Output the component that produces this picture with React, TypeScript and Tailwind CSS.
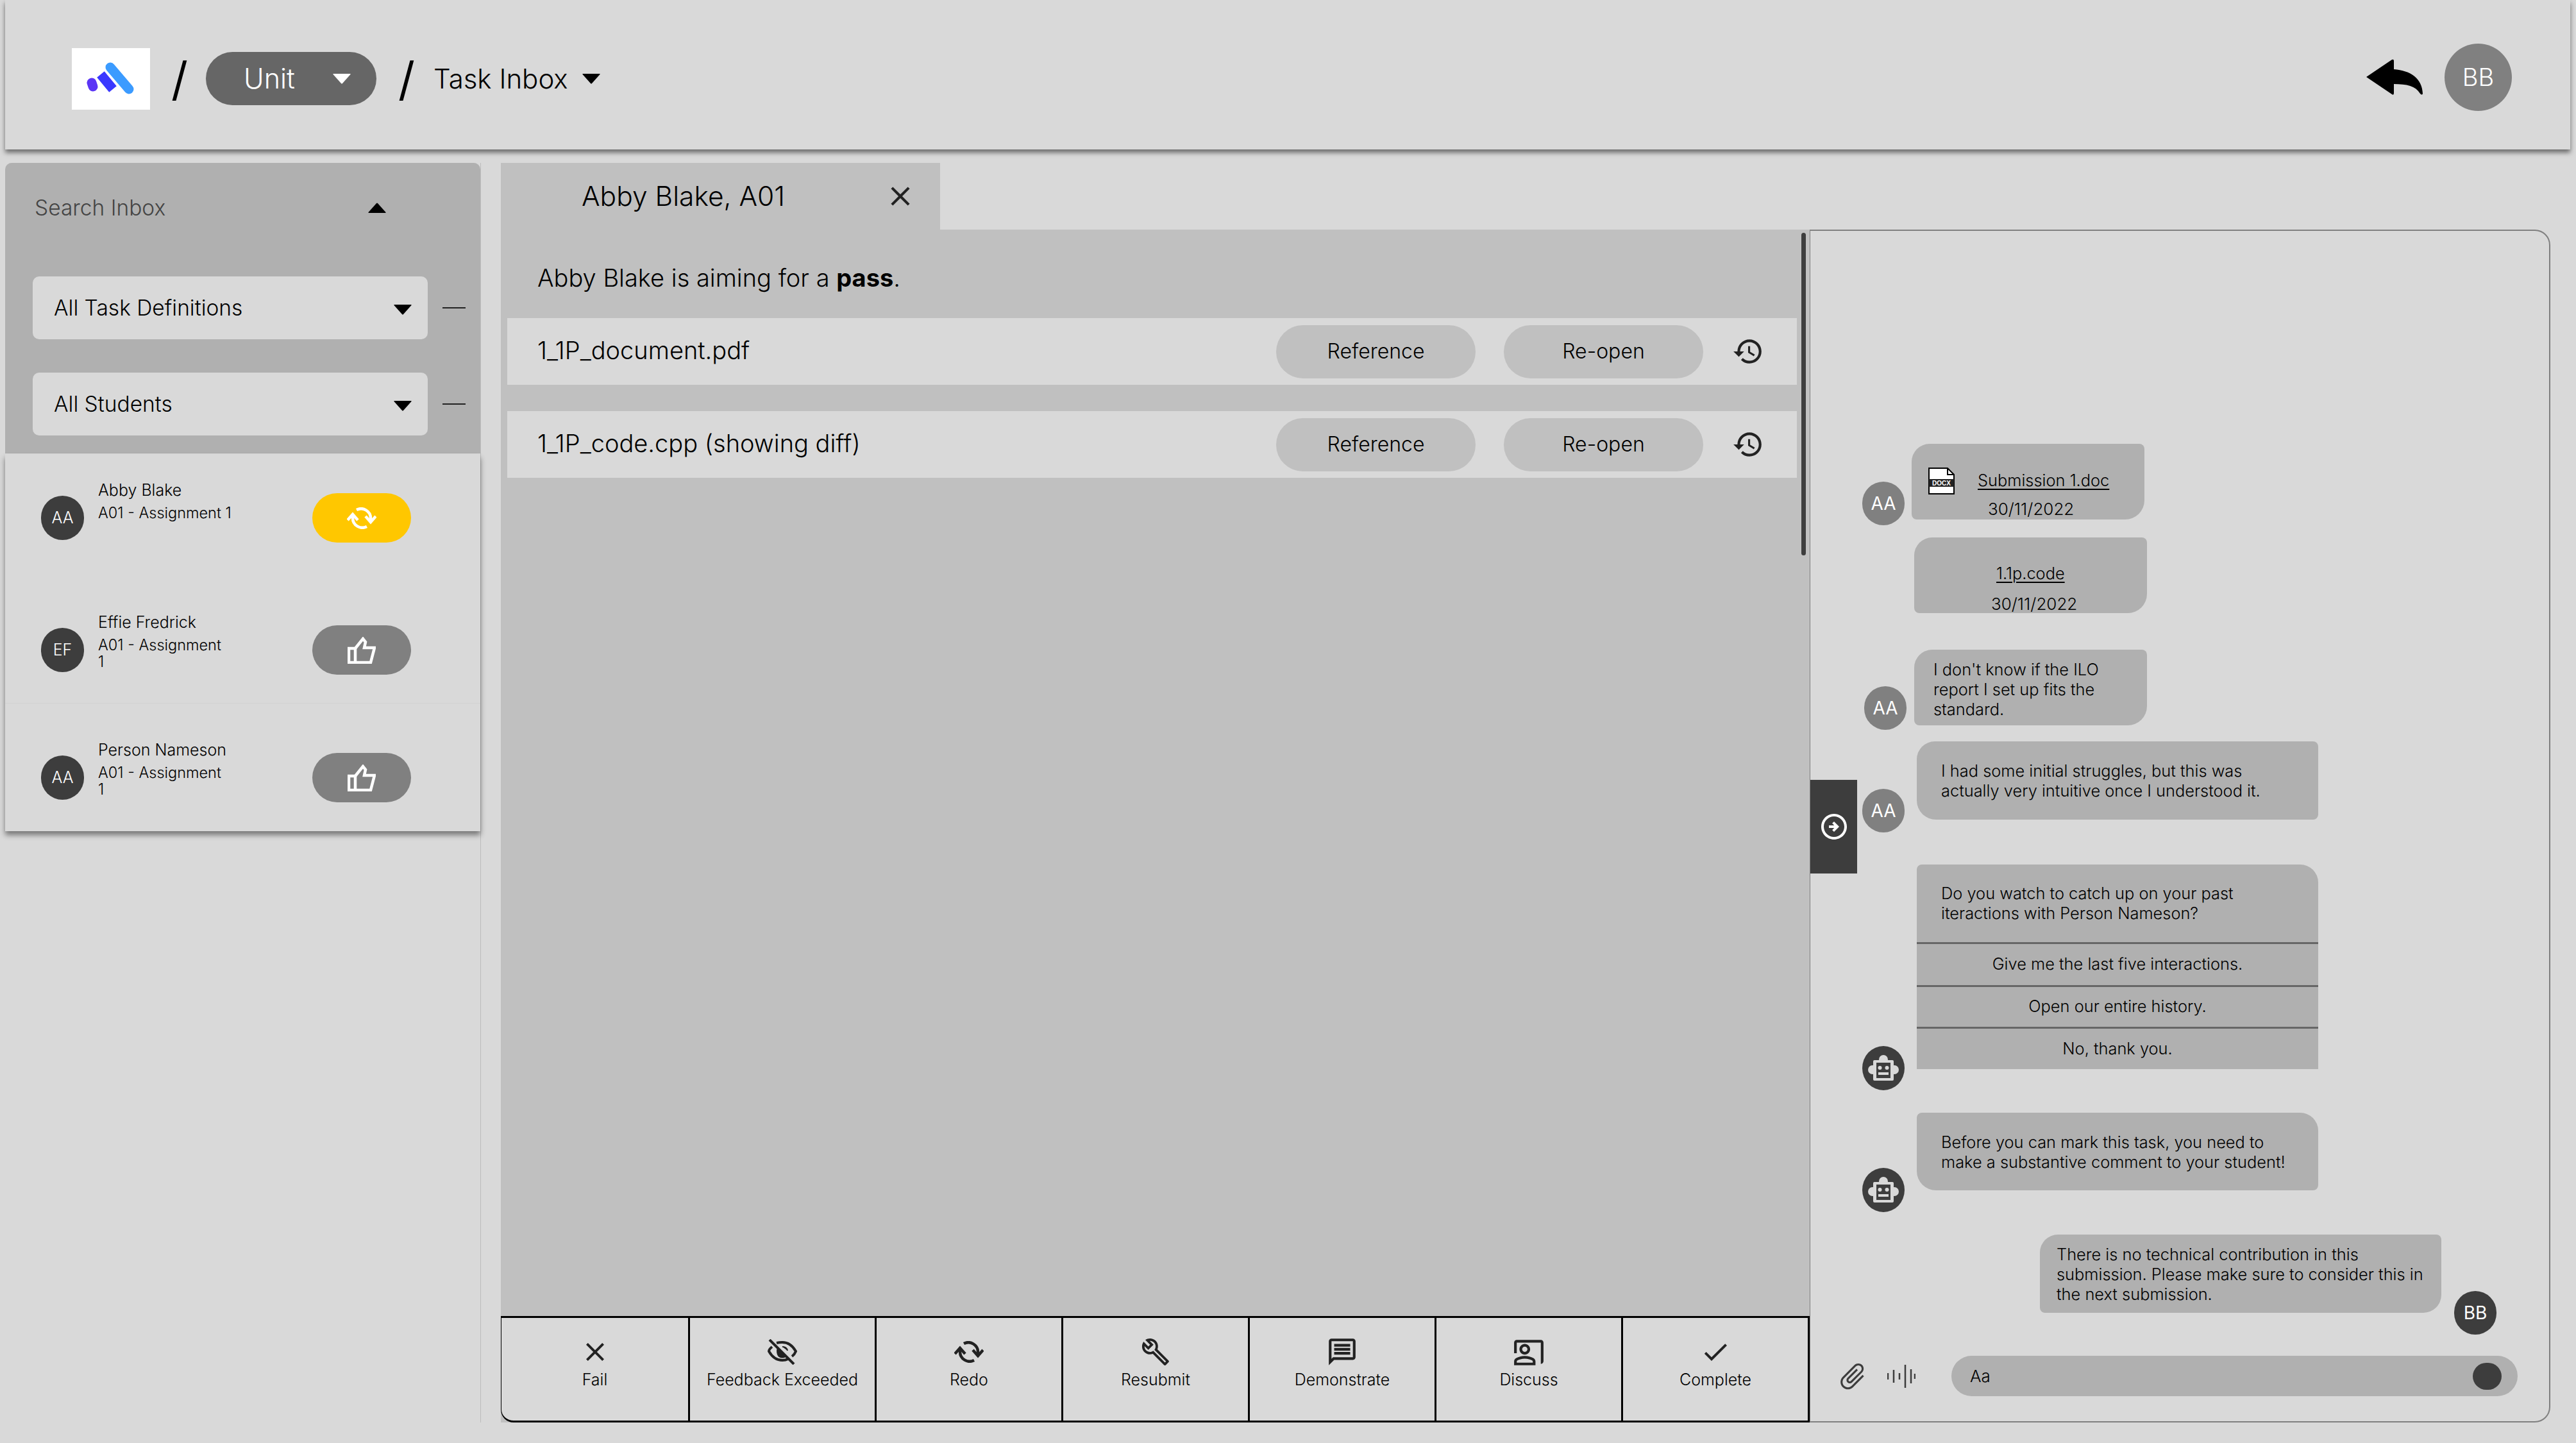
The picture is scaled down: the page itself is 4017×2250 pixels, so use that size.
import type { ReactNode } from 'react'
import {
  MdCheck,
  MdClose,
  MdHistory,
  MdOutlineArrowCircleRight,
  MdOutlineBuild,
  MdOutlineCoPresent,
  MdOutlineMessage,
  MdOutlineAttachFile,
} from 'react-icons/md'

function Triangle({ className }: { className: string }) {
  return (
    <svg viewBox="0 0 28 16" className={`w-[28px] h-[16px] shrink-0 ${className}`}>
      <path d="M1 0h26q1 0 .5 1L15 15q-1 1-2 0L.5 1Q0 0 1 0z" fill="currentColor" />
    </svg>
  )
}

function Logo() {
  return (
    <div className="w-[122px] h-[96px] bg-white shrink-0">
      <svg viewBox="0 0 122 96" className="w-full h-full">
        <path d="M60 30l29 34" stroke="#3b9bff" strokeWidth="15" strokeLinecap="round" />
        <path d="M45 41l19 23" stroke="#3a38ff" strokeWidth="15" strokeLinecap="butt" />
        <path d="M31 54l2 6" stroke="#5b35f5" strokeWidth="15" strokeLinecap="round" />
      </svg>
    </div>
  )
}

function Robot() {
  return (
    <svg viewBox="0 0 66 69" className="w-[66px] h-[69px]">
      <ellipse cx="33" cy="34.5" rx="33" ry="34.5" fill="#3d3d3d" />
      <g fill="#d9d9d9">
        <circle cx="33" cy="21" r="7" />
        <circle cx="16" cy="37" r="7" />
        <circle cx="50" cy="37" r="7" />
        <rect x="17" y="22" width="32" height="32" rx="2" />
      </g>
      <rect x="22" y="26" width="22" height="24" fill="#3d3d3d" />
      <circle cx="27.5" cy="34" r="3" fill="#d9d9d9" />
      <circle cx="38.5" cy="34" r="3" fill="#d9d9d9" />
      <rect x="25" y="41" width="16" height="4" fill="#d9d9d9" />
    </svg>
  )
}

function DocIcon() {
  return (
    <svg viewBox="0 0 41 42" className="w-[41px] h-[42px] shrink-0">
      <path d="M1 1h29l10 10v30H1z" fill="#fff" stroke="#000" strokeWidth="2" />
      <path d="M30 1v10h10" fill="none" stroke="#000" strokeWidth="2" />
      <rect x="1" y="18" width="39" height="12" fill="#222" />
      <text x="20.5" y="28" textAnchor="middle" fontSize="10" fontWeight="700" fill="#fff" fontFamily="Liberation Sans, sans-serif">
        DOCX
      </text>
    </svg>
  )
}

function Wave() {
  return (
    <svg viewBox="0 0 44 38" className="w-[44px] h-[38px]" stroke="#3d3d3d" strokeWidth="2.5">
      <path d="M1 14v10M10 9v20M19 14v10M28 1v36M37 8v22M43 15v8" />
    </svg>
  )
}

function EyeOff() {
  return (
    <svg viewBox="0 0 46 40" className="w-[46px] h-[40px]" fill="none" stroke="#222" strokeWidth="4">
      <path d="M7 12Q2 16 2 19q8 14 21 14 5 0 9-2M14 6q4-1 9-1 13 0 21 14-2 5-6 8" />
      <path d="M23 12a7 7 0 0 1 8 6M15 18q0-2 1-3l12 12q-6 3-10 0-3-3-3-9z" fill="#222" strokeWidth="2" />
      <path d="M3 1l38 38" />
    </svg>
  )
}

function SyncIcon({ className }: { className: string }) {
  return (
    <svg viewBox="0 0 46 34" className={`w-[46px] h-[34px] ${className}`} fill="none" stroke="currentColor" strokeWidth="4.5">
      <path d="M9 12v5a15 15 0 0 0 22 13" />
      <path d="M15 4A15 15 0 0 1 37 17v5" />
      <path d="M1 20l8-9 8 9" />
      <path d="M29 14l8 9 8-9" />
    </svg>
  )
}

function ThumbIcon() {
  return (
    <svg viewBox="0 0 44 42" className="w-[44px] h-[42px]" fill="none" stroke="#fff" strokeWidth="4.5">
      <path d="M2 18h10v22H2z" />
      <path d="M12 18L24 3l4 5-2 9h16l-6 23H12" />
    </svg>
  )
}

function Avatar({ label, className }: { label: string; className: string }) {
  return (
    <div
      className={`w-[66px] h-[68px] rounded-full text-white text-[28px] flex items-center justify-center shrink-0 ${className}`}
    >
      {label}
    </div>
  )
}

const students = [
  { name: 'Abby Blake', initials: 'AA', rowClass: 'h-[198px] pt-[38px]', textClass: 'w-[240px]', accent: true },
  { name: 'Effie Fredrick', initials: 'EF', rowClass: 'h-[191px] pt-[46px] border-b border-[#d2d2d2]', textClass: 'w-[200px]', accent: false },
  { name: 'Person Nameson', initials: 'AA', rowClass: 'h-[199px] pt-[54px]', textClass: 'w-[200px]', accent: false },
]

const actions: { label: string; icon: ReactNode }[] = [
  { label: 'Fail', icon: <MdClose size={48} color="#222" /> },
  { label: 'Feedback Exceeded', icon: <EyeOff /> },
  { label: 'Redo', icon: <SyncIcon className="text-[#222222]" /> },
  { label: 'Resubmit', icon: <MdOutlineBuild size={46} color="#222" /> },
  { label: 'Demonstrate', icon: <MdOutlineMessage size={50} color="#222" /> },
  { label: 'Discuss', icon: <MdOutlineCoPresent size={50} color="#222" /> },
  { label: 'Complete', icon: <MdCheck size={48} color="#222" /> },
]

function Sidebar() {
  return (
    <aside className="w-[742px] shrink-0 border-r border-[#bcbcbc] text-black">
      <div className="bg-[#b0b0b0] h-[453px] rounded-t-[10px] pt-[52px]">
        <div className="h-[36px] flex items-center justify-between pl-[46px] pr-[147px]">
          <span className="text-[33.5px] font-light text-[#444444]">Search Inbox</span>
          <Triangle className="rotate-180 text-black" />
        </div>
        {['All Task Definitions', 'All Students'].map((label, i) => (
          <div key={label} className={`flex items-center ml-[43px] ${i === 0 ? 'mt-[89px]' : 'mt-[52px]'}`}>
            <div className="w-[616px] h-[98px] bg-[#d9d9d9] rounded-[10px] flex items-center justify-between pl-[33px] pr-[25px] text-[33.5px] font-light">
              {label}
              <Triangle className="mt-[6px]" />
            </div>
            <div className="ml-[23px] w-[36px] h-[2px] bg-[#222222]" />
          </div>
        ))}
      </div>
      <div className="shadow-[0_6px_8px_rgba(0,0,0,0.45)] mt-[1px]">
        {students.map((s) => (
          <div key={s.name} className={`flex items-start ${s.rowClass}`}>
            <div className="ml-[56px] mt-[27px] w-[67px] h-[69px] rounded-full bg-[#3d3d3d] text-white text-[25px] font-light flex items-center justify-center shrink-0">
              {s.initials}
            </div>
            <div className="ml-[22px] w-[334px] shrink-0">
              <div className="text-[25px] leading-[36px] font-light">{s.name}</div>
              <div className={`text-[23.5px] leading-[26px] mt-[5px] font-light ${s.textClass}`}>A01 - Assignment 1</div>
            </div>
            <div
              className={`mt-[23px] w-[154px] h-[77px] rounded-full flex items-center justify-center ${s.accent ? 'bg-[#ffc700] text-white' : 'bg-[#808080]'}`}
            >
              {s.accent ? <SyncIcon className="text-white" /> : <ThumbIcon />}
            </div>
          </div>
        ))}
      </div>
    </aside>
  )
}

function SubmissionRow({ name }: { name: string }) {
  return (
    <div className="ml-[10px] mr-[20px] h-[104px] bg-[#d9d9d9] flex items-center pl-[47px] pr-[51px] text-[38px] font-light">
      <span className="flex-1 pb-[3px]">{name}</span>
      <button className="w-[311px] h-[83px] rounded-full bg-[#c0c0c0] text-[32px] font-light">Reference</button>
      <button className="ml-[44px] w-[311px] h-[83px] rounded-full bg-[#c0c0c0] text-[32px] font-light">Re-open</button>
      <MdHistory size={50} color="#222" className="ml-[45px]" />
    </div>
  )
}

function Workspace() {
  return (
    <section className="w-[2041px] shrink-0 ml-[31px] flex flex-col text-black">
      <div className="w-[685px] h-[104px] bg-[#c0c0c0] flex items-center justify-between pl-[126px] pr-[37px] text-[42.5px] font-light">
        Abby Blake, A01
        <MdClose size={50} color="#222" />
      </div>
      <div className="relative flex-1 bg-[#c0c0c0] flex flex-col">
        <p className="pt-[55px] pl-[57px] h-[138px] text-[38px] leading-[40px] font-light">
          Abby Blake is aiming for a <b className="font-bold">pass</b>.
        </p>
        <SubmissionRow name="1_1P_document.pdf" />
        <div className="h-[41px]" />
        <SubmissionRow name="1_1P_code.cpp (showing diff)" />
        <div className="absolute left-[2028px] top-[5px] w-[7px] h-[503px] rounded-full bg-[#3d3d3d]" />
        <div className="mt-auto h-[166px] grid grid-cols-7 bg-[#d9d9d9] border-y-[3px] border-r-[3px] border-l border-black rounded-bl-[20px]">
          {actions.map((a, i) => (
            <div key={a.label} className={`flex flex-col items-center pt-[28px] ${i > 0 ? 'border-l-[3px] border-black' : ''}`}>
              <div className="h-[50px] flex items-center justify-center">{a.icon}</div>
              <div className="mt-[2px] text-[25px] leading-[32px] font-light whitespace-nowrap">{a.label}</div>
            </div>
          ))}
        </div>
      </div>
    </section>
  )
}

function Chat() {
  const bubble = 'bg-[#b0b0b0] text-[25.4px] leading-[31px] font-light shrink-0'
  return (
    <section className="relative w-[1155px] shrink-0 mt-[104px] pl-[1px] flex flex-col border-2 border-l-[1px] border-[#808080] rounded-r-[24px] text-black">
      <div className="absolute left-0 top-[856px] w-[73px] h-[146px] bg-[#3d3d3d] flex items-center justify-center">
        <MdOutlineArrowCircleRight size={48} color="#fff" />
      </div>

      <div className="flex items-end ml-[80px] mt-[332px]">
        <Avatar label="AA" className="mb-[-9px] mr-[11px] bg-[#808080]" />
        <div className={`${bubble} w-[363px] h-[118px] rounded-tl-[28px] rounded-tr-[8px] rounded-br-[30px] rounded-bl-[8px] pt-[37px]`}>
          <div className="flex items-start pl-[26px]">
            <DocIcon />
            <a className="ml-[36px] mt-[4px] underline underline-offset-4">Submission 1.doc</a>
          </div>
          <div className="mt-[7px] ml-[119px] text-[26px]">30/11/2022</div>
        </div>
      </div>

      <div className="ml-[161px] mt-[28px]">
        <div className={`${bubble} w-[363px] h-[118px] rounded-tl-[28px] rounded-tr-[8px] rounded-br-[30px] rounded-bl-[8px] pt-[40px]`}>
          <a className="ml-[128px] underline underline-offset-4">1.1p.code</a>
          <div className="mt-[17px] ml-[120px] text-[26px]">30/11/2022</div>
        </div>
      </div>

      <div className="flex items-end ml-[83px] mt-[57px]">
        <Avatar label="AA" className="mb-[-7px] mr-[12px] bg-[#808080]" />
        <div className={`${bubble} w-[363px] h-[118px] rounded-tl-[28px] rounded-tr-[8px] rounded-br-[30px] rounded-bl-[8px] pl-[30px] pt-[15px]`}>
          I don't know if the ILO
          <br />
          report I set up fits the
          <br />
          standard.
        </div>
      </div>

      <div className="flex items-end ml-[80px] mt-[25px]">
        <Avatar label="AA" className="mb-[-20px] mr-[19px] bg-[#808080]" />
        <div className={`${bubble} w-[626px] h-[122px] rounded-tl-[28px] rounded-tr-[8px] rounded-br-[8px] rounded-bl-[30px] pl-[38px] pt-[30px]`}>
          I had some initial struggles, but this was
          <br />
          actually very intuitive once I understood it.
        </div>
      </div>

      <div className="flex items-end ml-[80px] mt-[70px]">
        <div className="mb-[-33px] mr-[19px] shrink-0">
          <Robot />
        </div>
        <div className={`${bubble} w-[626px] rounded-tl-[8px] rounded-tr-[28px]`}>
          <div className="h-[121px] pl-[38px] pt-[29px]">
            Do you watch to catch up on your past
            <br />
            iteractions with Person Nameson?
          </div>
          <div className="h-[67px] pb-[3px] border-t-[3px] border-[#666666] flex items-center justify-center">Give me the last five interactions.</div>
          <div className="h-[65px] pb-[3px] border-t-[3px] border-[#666666] flex items-center justify-center">Open our entire history.</div>
          <div className="h-[66px] pb-[3px] border-t-[3px] border-[#666666] flex items-center justify-center">No, thank you.</div>
        </div>
      </div>

      <div className="flex items-end ml-[80px] mt-[68px]">
        <div className="mb-[-34px] mr-[19px] shrink-0">
          <Robot />
        </div>
        <div className={`${bubble} w-[626px] h-[121px] rounded-tl-[8px] rounded-tr-[28px] rounded-br-[8px] rounded-bl-[30px] pl-[38px] pt-[30px]`}>
          Before you can mark this task, you need to
          <br />
          make a substantive comment to your student!
        </div>
      </div>

      <div className="flex items-end ml-[357px] mt-[69px]">
        <div className={`${bubble} w-[626px] h-[122px] rounded-tl-[28px] rounded-tr-[8px] rounded-br-[28px] rounded-bl-[8px] pl-[26px] pt-[15px]`}>
          There is no technical contribution in this
          <br />
          submission. Please make sure to consider this in
          <br />
          the next submission.
        </div>
        <Avatar label="BB" className="mb-[-34px] ml-[20px] bg-[#3d3d3d]" />
      </div>

      <div className="mt-auto mb-[39px] flex items-center ml-[40px]">
        <MdOutlineAttachFile size={50} color="#3d3d3d" className="rotate-45" />
        <div className="ml-[29px]">
          <Wave />
        </div>
        <div className="ml-[56px] w-[883px] h-[63px] rounded-full bg-[#b0b0b0] flex items-center justify-between pl-[29px] pr-[25px] text-[26px] font-light">
          Aa
          <div className="w-[45px] h-[42px] rounded-full bg-[#3d3d3d]" />
        </div>
      </div>
    </section>
  )
}

export default function App() {
  return (
    <div className="w-[4017px] h-[2250px] bg-[#d9d9d9] pl-[8px] overflow-hidden flex flex-col font-[Inter,sans-serif] text-black">
      <header className="w-[4000px] h-[233px] shrink-0 pt-[12px] pl-[104px] pr-[91px] flex items-center justify-between shadow-[0_5px_7px_rgba(0,0,0,0.5)]">
        <div className="flex items-center">
          <Logo />
          <span className="ml-[33px] w-[20px] text-[72px] leading-none font-normal text-center">/</span>
          <div className="ml-[34px] w-[266px] h-[83px] rounded-full bg-[#666666] text-white flex items-center pl-[59px] text-[43px] font-light">
            Unit
            <Triangle className="ml-[59px] text-white" />
          </div>
          <span className="ml-[34px] w-[20px] text-[72px] leading-none font-normal text-center">/</span>
          <span className="ml-[35px] text-[42px] font-light">Task Inbox</span>
          <Triangle className="ml-[22px]" />
        </div>
        <div className="flex items-center -mt-[4px]">
          <svg viewBox="0 0 89 57" className="w-[89px] h-[57px]">
            <path d="M1 28L41 1q3-1 3 2v13c26 2 44 14 45 38q-1 3-4 0c-7-12-21-15-41-15v14q0 4-3 2z" />
          </svg>
          <div className="ml-[34px] w-[105px] h-[105px] rounded-full bg-[#808080] text-white text-[38px] font-light flex items-center justify-center">
            BB
          </div>
        </div>
      </header>
      <main className="flex-1 min-h-0 flex pt-[21px] pb-[32px]">
        <Sidebar />
        <Workspace />
        <Chat />
      </main>
    </div>
  )
}
